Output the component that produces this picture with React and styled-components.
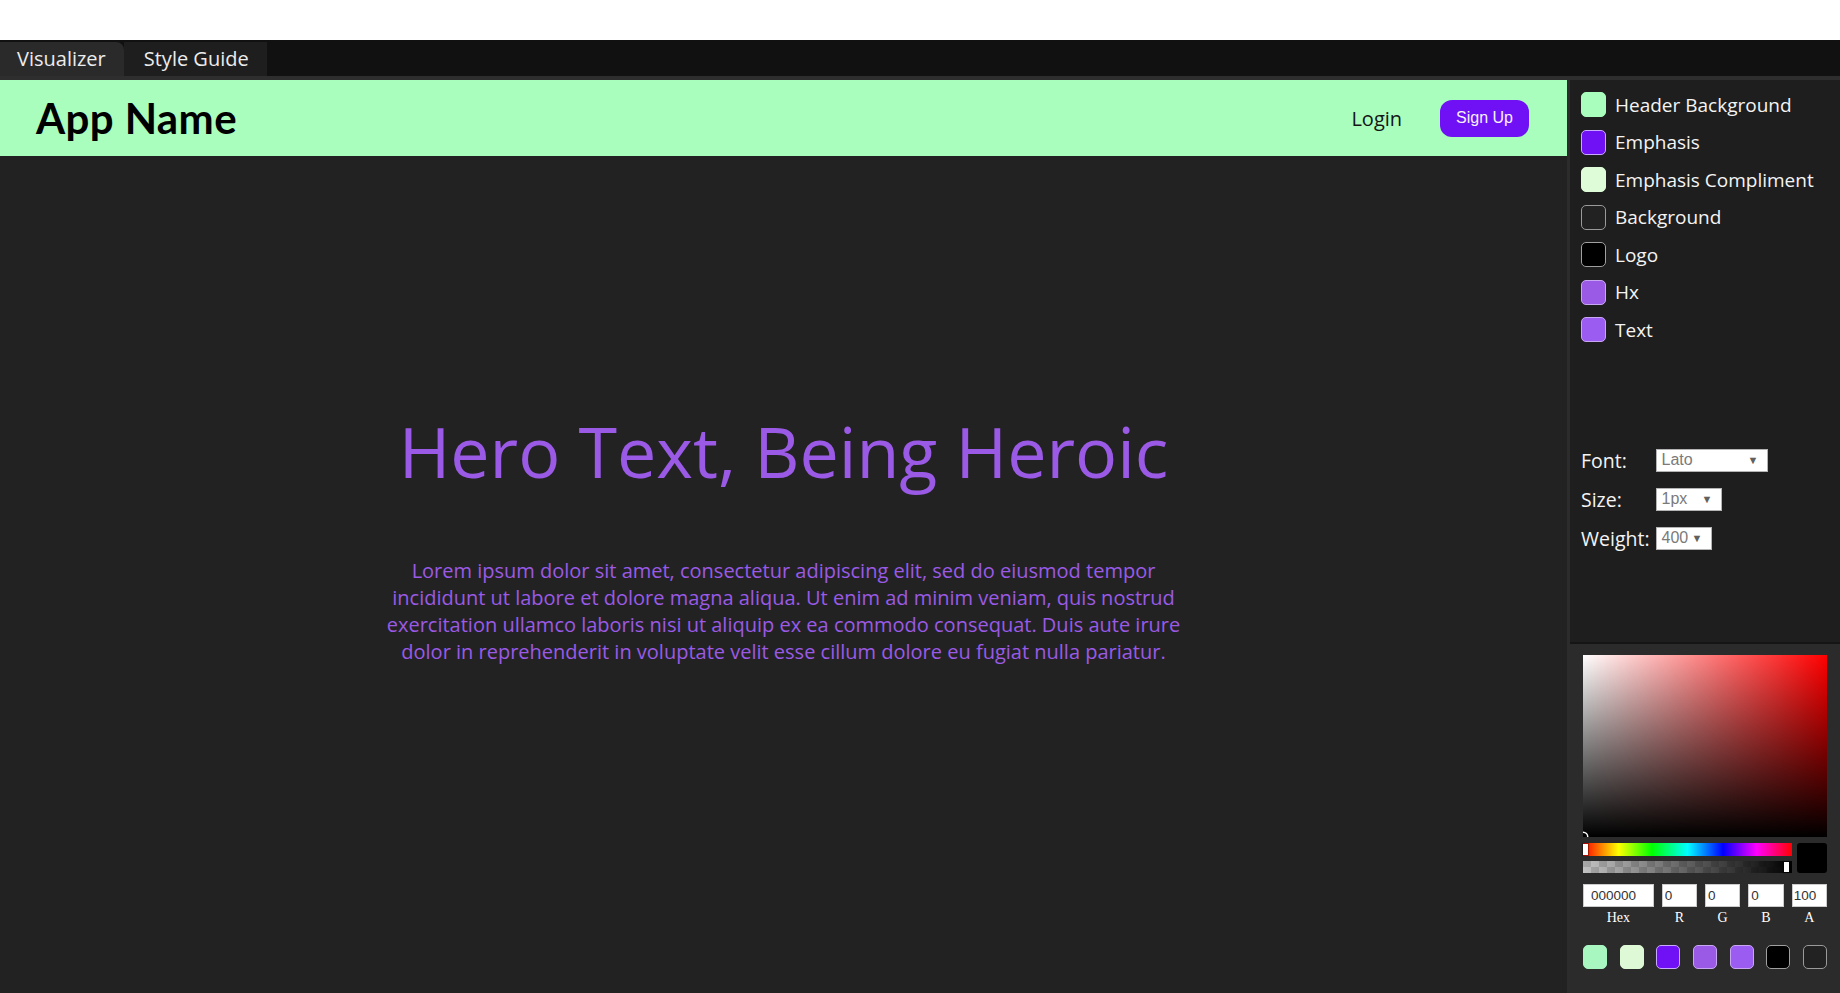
import React from 'react';
import styled, { createGlobalStyle } from 'styled-components';

const GlobalStyle = createGlobalStyle`
  html, body { margin: 0; padding: 0; background: #ffffff; }
  body { font-family: "Open Sans", "Noto Sans", sans-serif; }
  #root { height: 993px; display: flex; flex-direction: column; overflow: hidden; }
  * { box-sizing: border-box; }
`;

const TopStrip = styled.div`
  height: 40px;
  flex: none;
  background: #ffffff;
`;

const TabBar = styled.nav`
  height: 40px;
  flex: none;
  display: flex;
  align-items: flex-end;
  padding-top: 2px;
  background: #111111;
  border-bottom: 4px solid #2e2e2e;
`;

const Tab = styled.div`
  height: 34px;
  padding: 0 18px 0 17px;
  font-size: 20px;
  line-height: 34px;
  color: #ececec;
  background: ${p => (p.$active ? '#2a2a2a' : '#1e1e1e')};
  border-top-right-radius: ${p => (p.$active ? '8px' : '0')};
  padding-left: ${p => (p.$active ? '17px' : '20px')};
`;

const Workspace = styled.div`
  flex: 1;
  min-height: 0;
  display: flex;
`;

const Preview = styled.main`
  flex: 1;
  display: flex;
  flex-direction: column;
  background: #232223;
`;

const SiteHeader = styled.header`
  height: 76px;
  flex: none;
  display: flex;
  align-items: center;
  justify-content: space-between;
  padding: 0 38px 0 36px;
  background: #a9fdbd;
`;

const Logo = styled.h1`
  margin: 0;
  font-family: Lato, "Open Sans", sans-serif;
  font-weight: 700;
  font-size: 42px;
  color: #000000;
  letter-spacing: 0.4px;
`;

const Nav = styled.div`
  display: flex;
  align-items: center;
  gap: 38px;
`;

const LoginLink = styled.span`
  font-size: 20px;
  color: #151515;
`;

const SignUp = styled.button`
  height: 37px;
  padding: 0 16px;
  border: none;
  border-radius: 12px;
  background: #7011f5;
  color: #f6f0ff;
  font-family: "Liberation Sans", Arial, sans-serif;
  font-size: 16px;
`;

const Hero = styled.section`
  display: flex;
  flex-direction: column;
  align-items: center;
  padding-top: 246px;
  text-align: center;
`;

const HeroTitle = styled.h2`
  margin: 0;
  font-weight: 400;
  font-size: 70px;
  line-height: 98px;
  color: #9a5ae6;
`;

const HeroBody = styled.p`
  margin: 57px 0 0;
  width: 814px;
  font-size: 20px;
  line-height: 27px;
  color: #9a5ae6;
`;

const Sidebar = styled.aside`
  width: 273px;
  flex: none;
  display: flex;
  flex-direction: column;
  border-left: 3px solid #2c2c2c;
`;

const Settings = styled.div`
  height: 564px;
  flex: none;
  padding: 6px 0 0 11px;
  background: #1e1e1e;
  border-bottom: 2px solid #151515;
`;

const ColorList = styled.ul`
  list-style: none;
  margin: 0;
  padding: 0;
`;

const ColorRow = styled.li`
  height: 37.5px;
  display: flex;
  align-items: center;
  gap: 9px;
  font-size: 19px;
  color: #f4f4f4;
`;

const Chip = styled.span`
  width: ${p => p.$size || 25}px;
  height: ${p => p.$size || 25}px;
  flex: none;
  border-radius: 5px;
  background: ${p => p.$color};
  border: 1px solid ${p => p.$border || p.$color};
`;

const FontForm = styled.div`
  margin-top: 100px;
  display: grid;
  grid-template-columns: max-content max-content;
  column-gap: 6px;
  row-gap: 16px;
  align-items: center;
`;

const FieldLabel = styled.span`
  font-size: 19.5px;
  line-height: 23px;
  color: #f4f4f4;
`;

const SelectBox = styled.div`
  width: ${p => p.$width}px;
  height: 23px;
  display: flex;
  align-items: center;
  justify-content: space-between;
  padding: 0 8px 0 5px;
  background: #ffffff;
  border: 1px solid #b4b4b4;
  font-family: "Liberation Sans", Arial, sans-serif;
  font-size: 16px;
  color: #7a7a7a;
`;

const Caret = styled.span`
  font-size: 11px;
  color: #606060;
`;

const PickerPanel = styled.div`
  flex: 1;
  padding: 11px 13px;
  background: #2b2b2b;
`;

const Saturation = styled.div`
  position: relative;
  height: 182px;
  overflow: hidden;
  background:
    linear-gradient(to top, #000 0%, rgba(0, 0, 0, 0) 100%),
    linear-gradient(to right, #fff 0%, rgba(255, 255, 255, 0) 100%),
    #ff0000;
`;

const SatPointer = styled.span`
  position: absolute;
  left: -4px;
  bottom: -4px;
  width: 8px;
  height: 8px;
  border-radius: 50%;
  box-shadow: 0 0 0 1.5px #ffffff;
`;

const SliderRow = styled.div`
  margin-top: 6px;
  display: flex;
  gap: 5px;
`;

const Bars = styled.div`
  flex: 1;
  display: flex;
  flex-direction: column;
  gap: 5px;
`;

const HueBar = styled.div`
  position: relative;
  height: 13px;
  background: linear-gradient(to right, #f00 0%, #ff0 17%, #0f0 33%, #0ff 50%, #00f 67%, #f0f 83%, #f00 100%);
`;

const AlphaBar = styled.div`
  position: relative;
  height: 12px;
  background:
    linear-gradient(to right, rgba(0, 0, 0, 0) 0%, #000 100%),
    repeating-conic-gradient(#c2c2c2 0 25%, #a9a9a9 0 50%) 0 0 / 16px 12px;
`;

const Handle = styled.span`
  position: absolute;
  top: 1px;
  bottom: 1px;
  width: 5px;
  background: #ffffff;
  box-shadow: 0 0 1px 1px rgba(0, 0, 0, 0.35);
  ${p => (p.$end ? 'right: 3px;' : 'left: 0;')}
`;

const Swatch = styled.div`
  width: 30px;
  height: 30px;
  border-radius: 3px;
  background: #000000;
`;

const InputRow = styled.div`
  margin-top: 11px;
  display: grid;
  grid-template-columns: 2fr repeat(4, 1fr);
  column-gap: 8px;
`;

const Field = styled.label`
  display: flex;
  flex-direction: column;
  align-items: center;
`;

const ValueInput = styled.input`
  width: 100%;
  height: 23px;
  border: none;
  outline: none;
  padding: 0 0 0 ${p => p.$pad}px;
  background: #ffffff;
  box-shadow: inset 0 0 0 1px #cccccc;
  font-family: "Liberation Sans", Arial, sans-serif;
  font-size: 13.5px;
  color: #333333;
`;

const ValueLabel = styled.span`
  margin-top: 3px;
  font-family: "Liberation Serif", "Times New Roman", serif;
  font-size: 14px;
  line-height: 16px;
  color: #ffffff;
`;

const PresetRow = styled.div`
  margin-top: 19px;
  display: flex;
  justify-content: space-between;
`;

const themeColors = [
  { name: 'Header Background', color: '#a9fdbd' },
  { name: 'Emphasis', color: '#7011f5', border: '#c9a8ff' },
  { name: 'Emphasis Compliment', color: '#dffcd8' },
  { name: 'Background', color: '#232223', border: '#9a9a9a' },
  { name: 'Logo', color: '#000000', border: '#a0a0a0' },
  { name: 'Hx', color: '#9a5ae6', border: '#c8a6f2' },
  { name: 'Text', color: '#9b5cf2', border: '#c8a6f2' },
];

const presets = [
  { color: '#a8f6c0' },
  { color: '#def9d6' },
  { color: '#7011f5', border: '#c9a8ff' },
  { color: '#9a5ae6', border: '#c8a6f2' },
  { color: '#9b5cf2', border: '#c8a6f2' },
  { color: '#000000', border: '#a0a0a0' },
  { color: '#232223', border: '#9a9a9a' },
];

const fields = [
  { label: 'Hex', value: '000000', pad: 8 },
  { label: 'R', value: '0', pad: 3 },
  { label: 'G', value: '0', pad: 3 },
  { label: 'B', value: '0', pad: 3 },
  { label: 'A', value: '100', pad: 2 },
];

export default function App() {
  return (
    <>
      <GlobalStyle />
      <TopStrip />
      <TabBar>
        <Tab $active>Visualizer</Tab>
        <Tab>Style Guide</Tab>
      </TabBar>
      <Workspace>
        <Preview>
          <SiteHeader>
            <Logo>App Name</Logo>
            <Nav>
              <LoginLink>Login</LoginLink>
              <SignUp>Sign Up</SignUp>
            </Nav>
          </SiteHeader>
          <Hero>
            <HeroTitle>Hero Text, Being Heroic</HeroTitle>
            <HeroBody>
              Lorem ipsum dolor sit amet, consectetur adipiscing elit, sed do eiusmod tempor incididunt ut labore et
              dolore magna aliqua. Ut enim ad minim veniam, quis nostrud exercitation ullamco laboris nisi ut aliquip
              ex ea commodo consequat. Duis aute irure dolor in reprehenderit in voluptate velit esse cillum dolore eu
              fugiat nulla pariatur.
            </HeroBody>
          </Hero>
        </Preview>
        <Sidebar>
          <Settings>
            <ColorList>
              {themeColors.map(c => (
                <ColorRow key={c.name}>
                  <Chip $color={c.color} $border={c.border} />
                  {c.name}
                </ColorRow>
              ))}
            </ColorList>
            <FontForm>
              <FieldLabel>Font:</FieldLabel>
              <SelectBox $width={112}>Lato<Caret>▼</Caret></SelectBox>
              <FieldLabel>Size:</FieldLabel>
              <SelectBox $width={66}>1px<Caret>▼</Caret></SelectBox>
              <FieldLabel>Weight:</FieldLabel>
              <SelectBox $width={56}>400<Caret>▼</Caret></SelectBox>
            </FontForm>
          </Settings>
          <PickerPanel>
            <Saturation>
              <SatPointer />
            </Saturation>
            <SliderRow>
              <Bars>
                <HueBar><Handle /></HueBar>
                <AlphaBar><Handle $end /></AlphaBar>
              </Bars>
              <Swatch />
            </SliderRow>
            <InputRow>
              {fields.map(f => (
                <Field key={f.label}>
                  <ValueInput readOnly value={f.value} $pad={f.pad} />
                  <ValueLabel>{f.label}</ValueLabel>
                </Field>
              ))}
            </InputRow>
            <PresetRow>
              {presets.map((p, i) => (
                <Chip key={i} $size={24} $color={p.color} $border={p.border} />
              ))}
            </PresetRow>
          </PickerPanel>
        </Sidebar>
      </Workspace>
    </>
  );
}
